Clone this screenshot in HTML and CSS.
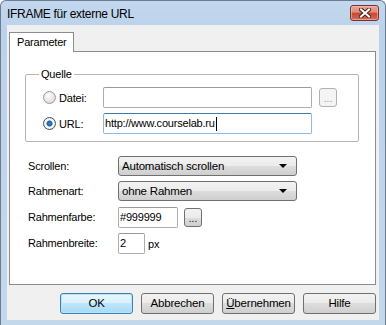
FILE: index.html
```html
<!DOCTYPE html>
<html lang="de">
<head>
  <meta charset="UTF-8">
  <meta name="viewport" content="width=device-width, initial-scale=1.0">
  <title>IFRAME für externe URL</title>
  <link rel="stylesheet" href="styles.css">
</head>
<body>
  <div class="window">
    <div class="titlebar">
      <span class="title">IFRAME für externe URL</span>
      <span class="close-btn">
        <svg width="12" height="10" viewBox="0 0 12 10">
          <path d="M2 1.5 L10 8.5 M10 1.5 L2 8.5" stroke="#4a2320" stroke-width="4" stroke-linecap="square"/>
          <path d="M2 1.5 L10 8.5 M10 1.5 L2 8.5" stroke="#ffffff" stroke-width="2" stroke-linecap="square"/>
        </svg>
      </span>
    </div>

    <div class="client">
      <div class="tabs">
        <div class="tab">Parameter</div>
      </div>

      <div class="tab-panel">
        <fieldset class="group">
          <legend>Quelle</legend>
          <div class="source-grid">
            <div class="radio-label"><span class="radio"></span>Datei:</div>
            <div class="textbox"></div>
            <div class="dots-btn disabled">...</div>
            <div class="radio-label"><span class="radio checked"></span>URL:</div>
            <div class="textbox focused">http://www.courselab.ru<span class="caret"></span></div>
          </div>
        </fieldset>

        <div class="form-grid">
          <div class="label">Scrollen:</div>
          <div class="combo">Automatisch scrollen<span class="arrow"></span></div>

          <div class="label">Rahmenart:</div>
          <div class="combo">ohne Rahmen<span class="arrow"></span></div>

          <div class="label">Rahmenfarbe:</div>
          <div class="field-row">
            <div class="textbox color-box">#999999</div>
            <div class="dots-btn">...</div>
          </div>

          <div class="label">Rahmenbreite:</div>
          <div class="field-row">
            <div class="textbox width-box">2</div>
            <span class="unit">px</span>
          </div>
        </div>
      </div>

      <div class="buttons">
        <div class="button default">OK</div>
        <div class="button">Abbrechen</div>
        <div class="button"><u>Ü</u>bernehmen</div>
        <div class="button">Hilfe</div>
      </div>
    </div>
  </div>
</body>
</html>
```

FILE: styles.css
```css
body {
  margin: 0;
  padding: 0;
  background-color: #ffffff;
  font-family: "Liberation Sans", Arial, sans-serif;
  font-size: 11px;
  letter-spacing: -0.2px;
  color: #000;
}
.window {
  width: 386px;
  height: 325px;
  box-sizing: border-box;
  border: 1px solid #6c7d90;
  border-bottom: none;
  border-radius: 6px 6px 0 0;
  background: linear-gradient(#c3d8ee, #bcd2ea 30px, #c4d8ec);
  padding: 0 6px 5px 6px;
  display: flex;
  flex-direction: column;
}
.titlebar {
  height: 24px;
  display: flex;
  justify-content: space-between;
  align-items: flex-start;
}
.title {
  font-size: 12px;
  letter-spacing: -0.3px;
  line-height: 14px;
  margin-top: 6px;
  color: #000;
}
.close-btn {
  width: 29px;
  height: 16px;
  box-sizing: border-box;
  margin-top: 4px;
  border: 1px solid #6e3530;
  border-radius: 3px;
  background: linear-gradient(#eba192, #df8a7a 45%, #c9462f 50%, #d86a55);
  box-shadow: inset 0 0 0 1px rgba(255, 210, 200, 0.5);
  display: flex;
  align-items: center;
  justify-content: center;
}
.client {
  flex: 1;
  background-color: #f0f0f0;
  padding: 7px 3px 5px 2px;
  display: flex;
  flex-direction: column;
}
.tabs {
  display: flex;
  height: 19px;
}
.tab {
  height: 20px;
  box-sizing: border-box;
  padding: 2px 7px 0 7px;
  width: 65px;
  border: 1px solid #898c95;
  border-bottom: none;
  background-color: #fff;
  position: relative;
  z-index: 1;
  line-height: 15px;
}
.tab-panel {
  height: 234px;
  box-sizing: border-box;
  border: 1px solid #898c95;
  background-color: #fff;
  padding: 0 16px 0 15px;
}
.group {
  margin: 16px 0 0 0;
  padding: 7px 0 7px 13px;
  border: 1px solid #b4b4b4;
  border-radius: 2px;
}
.group legend {
  padding: 0 2px;
  line-height: 12px;
}
.source-grid {
  margin-left: 4px;
  display: grid;
  grid-template-columns: 53px 209px 18px;
  grid-auto-rows: 21px;
  column-gap: 7px;
  row-gap: 5px;
  align-items: center;
}
.radio-label {
  display: flex;
  align-items: center;
  gap: 3px;
}
.radio {
  width: 13px;
  height: 13px;
  box-sizing: border-box;
  border-radius: 50%;
  border: 1px solid #9a9a9a;
  background: radial-gradient(circle at 40% 35%, #ffffff, #e2e2e2 60%, #cfcfcf);
  display: inline-block;
}
.radio.checked {
  border-color: #3b4f63;
  background: radial-gradient(circle, #2f8ed8 0, #1a5f9e 2.5px, #ffffff 3.5px, #e8e8e8 6px);
}
.textbox {
  height: 21px;
  box-sizing: border-box;
  border: 1px solid #abadb3;
  border-top-color: #9a9a9a;
  border-radius: 2px;
  background-color: #fff;
  padding: 0 1px;
  line-height: 19px;
  display: flex;
  align-items: center;
  white-space: nowrap;
}
.textbox.focused {
  border-color: #8cb8e2;
  border-top-color: #3d7bad;
}
.caret {
  display: inline-block;
  width: 1px;
  height: 14px;
  margin-left: 1px;
  background-color: #000;
}
.dots-btn {
  width: 18px;
  height: 19px;
  box-sizing: border-box;
  border: 1px solid #707070;
  border-radius: 3px;
  background: linear-gradient(#f2f2f2, #ebebeb 50%, #dddddd 50%, #cfcfcf);
  text-align: center;
  line-height: 19px;
  font-size: 10px;
  letter-spacing: 0;
}
.dots-btn.disabled {
  border-color: #adb2b5;
  background: #f4f4f4;
  color: #9b8fa6;
}
.form-grid {
  margin: 14px 0 0 3px;
  display: grid;
  grid-template-columns: 90px auto;
  grid-template-rows: 20px 21px 21px 21px;
  row-gap: 5px;
  align-items: center;
  justify-items: start;
}
.label {
  line-height: 13px;
}
.combo {
  width: 179px;
  height: 20px;
  box-sizing: border-box;
  border: 1px solid #707070;
  border-radius: 3px;
  background: linear-gradient(#f2f2f2, #ebebeb 50%, #dddddd 50%, #cfcfcf);
  padding: 0 9px 0 3px;
  display: flex;
  align-items: center;
  justify-content: space-between;
  align-self: start;
  font-size: 11.5px;
}
.arrow {
  width: 0;
  height: 0;
  border-left: 4px solid transparent;
  border-right: 4px solid transparent;
  border-top: 4px solid #000;
}
.field-row {
  display: flex;
  align-items: center;
  gap: 6px;
}
.color-box {
  width: 60px;
}
.width-box {
  width: 27px;
}
.unit {
  margin-left: -3px;
}
.buttons {
  margin-top: 8px;
  display: flex;
  justify-content: flex-end;
  gap: 8px;
}
.button {
  width: 73px;
  height: 21px;
  box-sizing: border-box;
  border: 1px solid #707070;
  border-radius: 3px;
  background: linear-gradient(#f2f2f2, #ebebeb 50%, #dddddd 50%, #cfcfcf);
  text-align: center;
  line-height: 19px;
  font-size: 11.5px;
}
.button.default {
  border-color: #3c7fb1;
  background: linear-gradient(#eaf6fd, #d9f0fc 50%, #bee6fd 50%, #a7d9f5);
  box-shadow: inset 0 0 0 1px #b6e4fb;
}
```
